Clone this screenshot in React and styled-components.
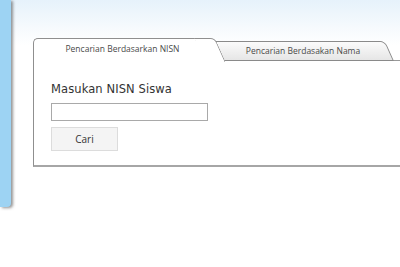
import React from "react";
import styled, { createGlobalStyle } from "styled-components";

const GlobalStyle = createGlobalStyle`
  html, body {
    margin: 0;
    padding: 0;
    width: 400px;
    height: 267px;
    overflow: hidden;
    background: linear-gradient(to bottom, #e6f2fb 0px, #f6fafd 28px, #ffffff 45px);
  }
`;

const Page = styled.div`
  display: flex;
  align-items: flex-start;
  height: 267px;
`;

const Sidebar = styled.div`
  width: 11px;
  height: 207px;
  flex-shrink: 0;
  background: #9dd3f3;
  border-bottom-right-radius: 4px;
  box-shadow: 2px 1px 3px rgba(60, 60, 60, 0.55);
`;

const Main = styled.div`
  flex: 1;
  padding: 38px 0 0 22px;
`;

const Panel = styled.div`
  width: 380px;
`;

const TabRow = styled.div`
  display: flex;
  align-items: flex-end;
  height: 22px;
  border-bottom: 1px solid #9a9a9a;
  position: relative;
`;

const ActiveTab = styled.div`
  position: relative;
  z-index: 2;
  width: 172px;
  height: 23px;
  margin-bottom: -1px;
  box-sizing: border-box;
  background: #fff;
  border-top: 1px solid #8f8f8f;
  border-left: 1px solid #8f8f8f;
  border-top-left-radius: 5px;
  display: flex;
  justify-content: center;
  padding-top: 4px;
  padding-left: 6px;
  font-family: "Open Sans", "Noto Sans", sans-serif;
  font-size: 8.5px;
  color: #4a4a4a;

  &::after {
    content: "";
    position: absolute;
    top: -1px;
    right: -10px;
    width: 20px;
    height: 23px;
    background: #fff;
    border-top: 1px solid #8f8f8f;
    border-right: 1px solid #8f8f8f;
    border-top-right-radius: 5px;
    transform: skewX(24deg);
    transform-origin: top;
  }
`;

const Tab = styled.div`
  position: relative;
  z-index: 1;
  width: 172px;
  height: 19px;
  margin-left: 8px;
  box-sizing: border-box;
  display: flex;
  justify-content: center;
  align-items: center;
  padding-left: 8px;
  font-family: "Open Sans", "Noto Sans", sans-serif;
  font-size: 8.5px;
  color: #4a4a4a;

  &::before {
    content: "";
    position: absolute;
    inset: 0 0 -1px 0;
    background: linear-gradient(to bottom, #fbfbfb, #e6e6e6);
    border: 1px solid #8a8a8a;
    border-top-right-radius: 5px;
    transform: skewX(24deg);
    transform-origin: top;
    z-index: -1;
  }
`;

const Body = styled.div`
  background: #fff;
  border-left: 1px solid #8f8f8f;
  border-bottom: 2px solid #a6a6a6;
  padding: 21px 0 14px 17px;
  display: flex;
  flex-direction: column;
  align-items: flex-start;
`;

const Label = styled.div`
  font-family: "DejaVu Sans", Verdana, sans-serif;
  font-size: 11.5px;
  letter-spacing: 0.1px;
  color: #333;
  margin-bottom: 7px;
`;

const Input = styled.input`
  width: 157px;
  height: 18px;
  box-sizing: border-box;
  border: 1px solid #a9a9a9;
  padding: 0 3px;
  margin: 0 0 6px 0;
  background: #fff;
  outline: none;
`;

const Button = styled.button`
  width: 67px;
  height: 24px;
  box-sizing: border-box;
  background: #f4f4f4;
  border: 1px solid #dcdcdc;
  border-radius: 0;
  font-family: "Open Sans", "Noto Sans", sans-serif;
  font-size: 10px;
  color: #333;
  padding: 0;
`;

export default function App() {
  return (
    <>
      <GlobalStyle />
      <Page>
        <Sidebar />
        <Main>
          <Panel>
            <TabRow>
              <ActiveTab>Pencarian Berdasarkan NISN</ActiveTab>
              <Tab>Pencarian Berdasakan Nama</Tab>
            </TabRow>
            <Body>
              <Label>Masukan NISN Siswa</Label>
              <Input type="text" />
              <Button>Cari</Button>
            </Body>
          </Panel>
        </Main>
      </Page>
    </>
  );
}
